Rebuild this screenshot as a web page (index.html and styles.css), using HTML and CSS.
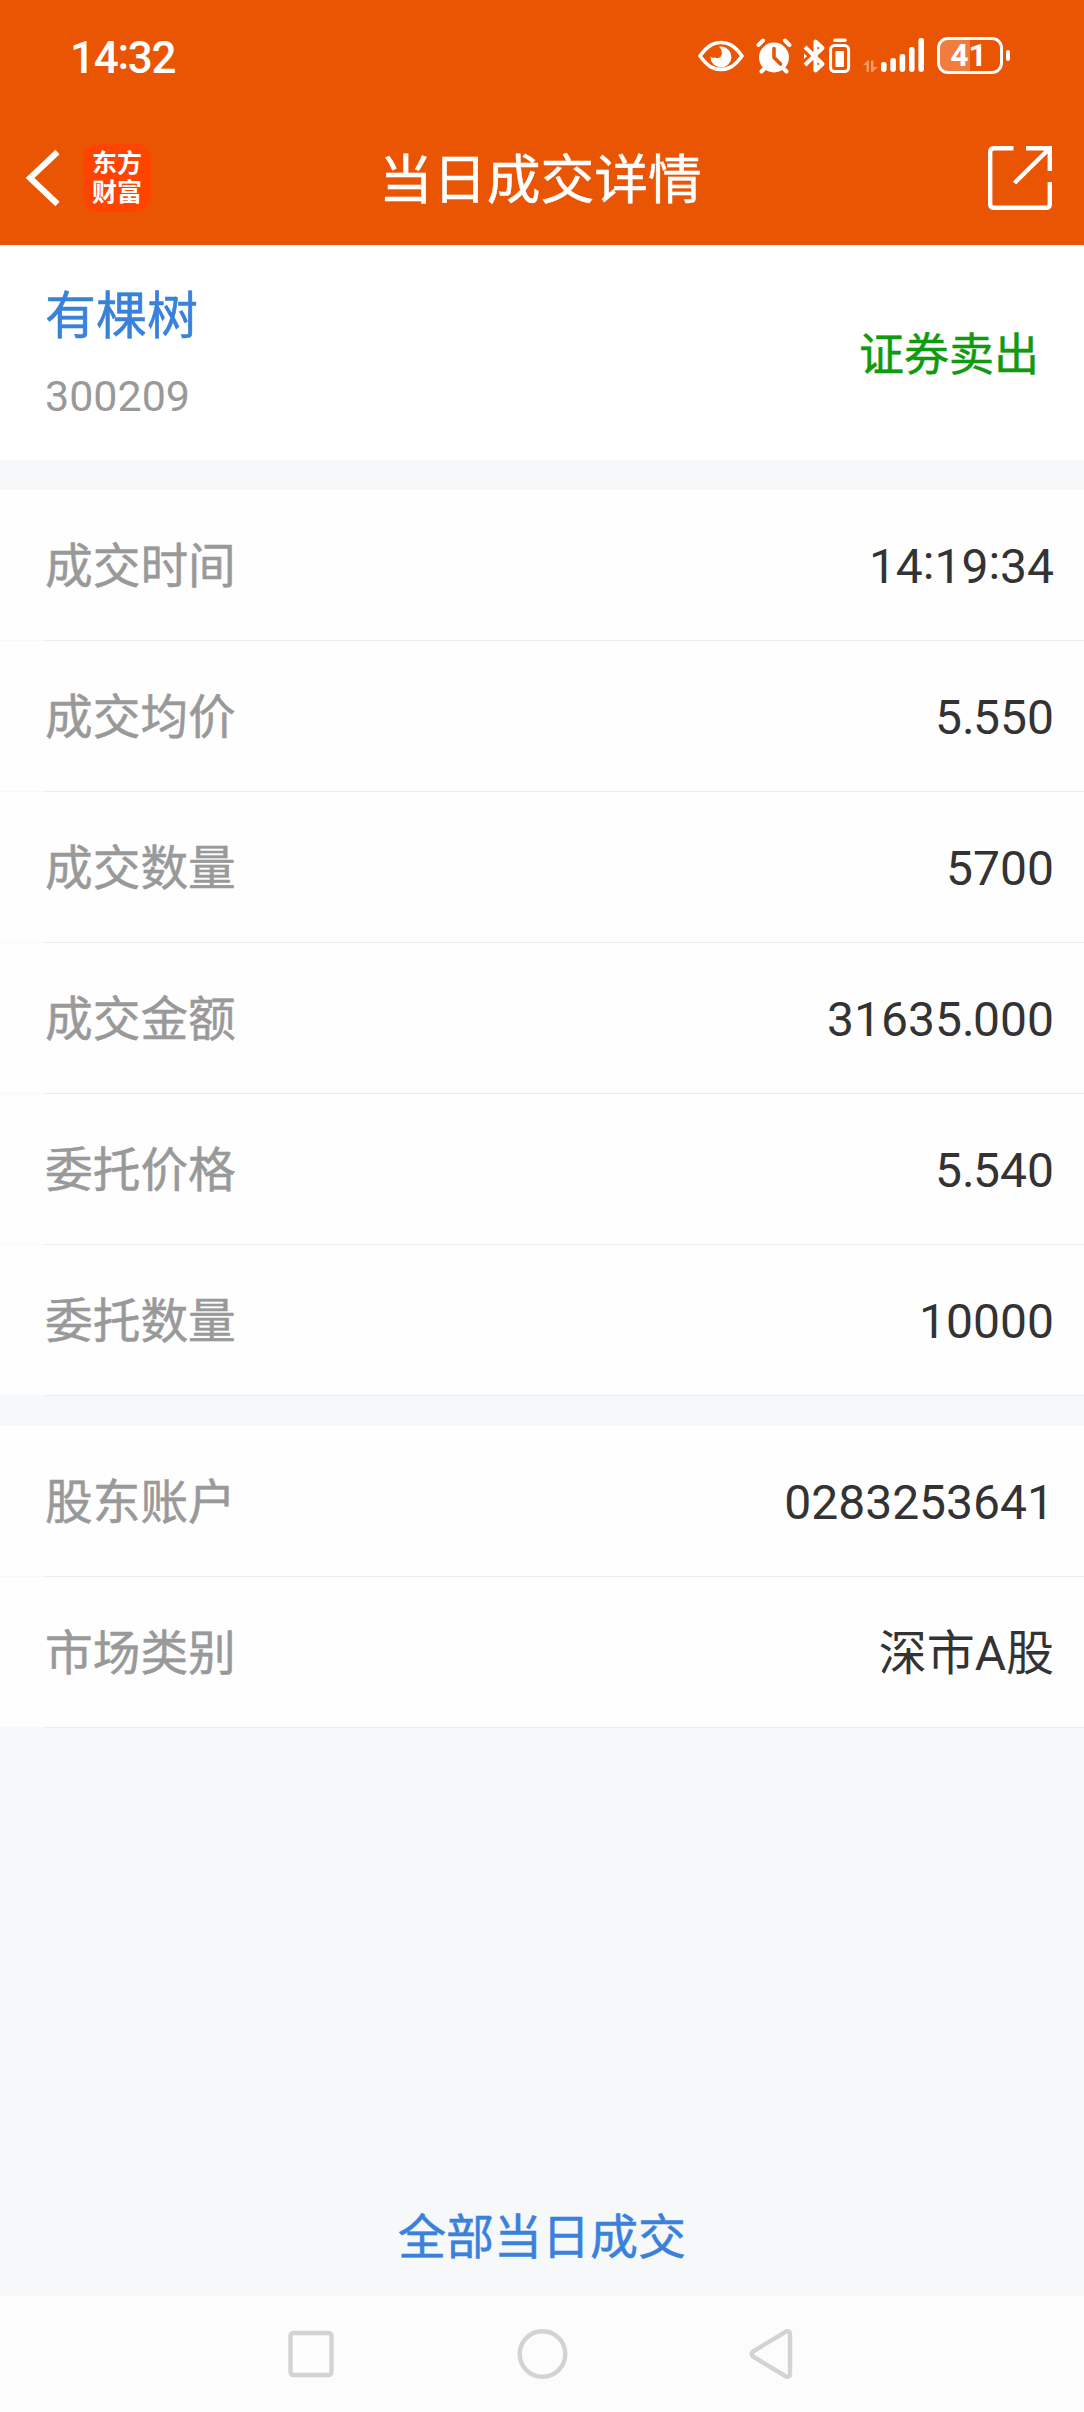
FILE: index.html
```html
<!DOCTYPE html>
<html lang="zh-CN">
<head>
<meta charset="utf-8">
<title>当日成交详情</title>
<link rel="stylesheet" href="styles.css">
</head>
<body>
<div class="screen">
  <header class="header">
    <div class="status">
      <time class="clock">14<span class="colon">:</span>32</time>
      <div class="status-icons">
        <svg class="eye" width="46" height="36" viewBox="0 0 46 36" fill="none" stroke="currentColor">
          <path d="M2 18C10 7 16 4.500 23 4.500S36 7 44 18C36 29 30 31.500 23 31.500S10 29 2 18Z" stroke-width="3.600" stroke-linejoin="round"/>
          <path d="M23.500 8.500A10.500 10.500 0 1 1 12.500 18.500Q14.500 20.500 17 19.500Q20 21.500 23 18.500Q25.500 13 21 8.800Z" fill="currentColor" stroke="none"/>
        </svg>
        <svg class="alarm" width="36" height="36" viewBox="0 0 36 36" fill="none" stroke="currentColor" stroke-linecap="round">
          <circle cx="18" cy="19.500" r="15" fill="currentColor" stroke="none"/>
          <path d="M2.500 7 7 2.500M29 2.500 33.500 7M8 31 5.500 33.500M28 31 30.500 33.500" stroke-width="4"/>
          <path class="alarm-hands" d="M18 10.500V19.500L24.500 26" stroke-width="3.600"/>
        </svg>
        <svg class="bluetooth" width="48" height="36" viewBox="0 0 48 36" fill="none" stroke="currentColor">
          <path d="M2 9 19.500 26 12.500 32.500V3.500L19.500 10 2 27" stroke-width="4" stroke-linejoin="round"/>
          <path d="M1 15.500V21L4 18.200Z" fill="currentColor" stroke="none"/>
          <rect x="27.600" y="7.600" width="18" height="26" rx="4" stroke-width="3"/>
          <path d="M32 2.300H42" stroke-width="3.400" stroke-linecap="round"/>
          <rect x="32.500" y="13" width="8.500" height="16" rx="1" fill="currentColor" stroke="none"/>
        </svg>
        <svg class="signal" width="62" height="36" viewBox="0 0 62 36" fill="currentColor">
          <path opacity=".4" d="M0 27 4.500 22.500H6V34H3.500V27ZM8 22.500H10.500V29H15L9.500 34H8Z"/>
          <rect x="18" y="24" width="5.600" height="10" rx="2.400"/>
          <rect x="27.300" y="20" width="5.600" height="14" rx="2.400"/>
          <rect x="36.600" y="16" width="5.600" height="18" rx="2.400"/>
          <rect x="46" y="9" width="5.600" height="25" rx="2.400"/>
          <rect x="55.400" y="0" width="5.600" height="34" rx="2.400"/>
        </svg>
        <div class="battery"><span class="battery-level">41</span></div>
        <div class="battery-tip"></div>
      </div>
    </div>
    <div class="titlebar">
      <div class="nav-left">
        <svg width="36" height="58" viewBox="0 0 36 58" fill="none" stroke="currentColor" stroke-width="6"><path d="M32.500 3 5 29 32.500 55"/></svg>
        <div class="logo"><span>东方</span><span>财富</span></div>
      </div>
      <h1 class="title">当日成交详情</h1>
      <svg class="share" width="64" height="64" viewBox="0 0 64 64" fill="none" stroke="currentColor" stroke-width="4.400">
        <path d="M25.500 2.200H6Q2.200 2.200 2.200 6V58Q2.200 61.800 6 61.800H58Q61.800 61.800 61.800 58V36"/>
        <path d="M38 2.200H61.800V25M61 3 26.500 37"/>
      </svg>
    </div>
  </header>

  <section class="summary">
    <div>
      <div class="stock-name">有棵树</div>
      <div class="stock-code">300209</div>
    </div>
    <div class="side">证券卖出</div>
  </section>

  <dl class="group">
    <div class="row"><dt>成交时间</dt><dd>14<span class="colon">:</span>19<span class="colon">:</span>34</dd></div>
    <div class="row"><dt>成交均价</dt><dd>5<span class="dot">.</span>550</dd></div>
    <div class="row"><dt>成交数量</dt><dd>5700</dd></div>
    <div class="row"><dt>成交金额</dt><dd>31635<span class="dot">.</span>000</dd></div>
    <div class="row"><dt>委托价格</dt><dd>5<span class="dot">.</span>540</dd></div>
    <div class="row"><dt>委托数量</dt><dd>10000</dd></div>
  </dl>
  <dl class="group">
    <div class="row"><dt>股东账户</dt><dd>0283253641</dd></div>
    <div class="row"><dt>市场类别</dt><dd>深市A股</dd></div>
  </dl>

  <div class="all-trades">全部当日成交</div>

  <nav class="system-nav">
    <svg width="50" height="52" viewBox="0 0 50 52"><rect x="4.500" y="5" width="41" height="42" rx="3"/></svg>
    <svg width="52" height="52" viewBox="0 0 52 52"><circle cx="25.500" cy="26" r="22.800"/></svg>
    <svg width="46" height="52" viewBox="0 0 46 52"><path d="M4 23.500Q1.500 26 4 28.500L37 48.500Q41 49.500 41 46V6Q41 2.500 37 3.500Z"/></svg>
  </nav>
</div>
</body>
</html>
```
FILE: styles.css
```css
* { box-sizing: border-box; }

body {
  margin: 0;
  background: #f6f8fa;
  font-family: Roboto, "Noto Sans CJK SC", sans-serif;
}

svg { display: block; flex: none; }

.screen {
  width: 1084px;
  height: 2412px;
  display: flex;
  flex-direction: column;
}

.header {
  height: 245px;
  flex: none;
  background: #e95502;
  color: #fff;
}

.status {
  height: 111px;
  padding: 0 74px 0 70px;
  display: flex;
  align-items: center;
  justify-content: space-between;
}

.clock {
  font-size: 44px;
  line-height: 52px;
  font-weight: 500;
  letter-spacing: -1.300px;
  padding-top: 4px;
}

.colon { vertical-align: .09em; line-height: 1; }

.status-icons { display: flex; align-items: center; }
.alarm { margin-left: 12px; }
.alarm-hands { stroke: #e95502; }
.bluetooth { margin-left: 11px; }
.signal { margin-left: 12px; }

.battery {
  width: 66px;
  height: 37px;
  margin-left: 12px;
  padding-right: 3px;
  border: 3px solid #fff;
  border-radius: 11px;
  background: linear-gradient(90deg, #f07c3e 50%, transparent 50%);
  display: flex;
  align-items: center;
  justify-content: center;
}

.battery-level {
  font-size: 32px;
  line-height: 31px;
  font-weight: 700;
}

.battery-tip {
  width: 4px;
  height: 11px;
  margin-left: 3px;
  border-radius: 2px;
  background: #fff;
}

.titlebar {
  height: 134px;
  padding: 0 32px 0 25px;
  display: grid;
  grid-template-columns: 1fr auto 1fr;
  align-items: start;
}

.nav-left { display: flex; align-items: center; gap: 22px; padding-top: 33px; }

.logo {
  width: 68px;
  height: 68px;
  border-radius: 15px;
  background: #ff4400;
  display: flex;
  flex-direction: column;
  align-items: center;
  justify-content: center;
  font-size: 25px;
  line-height: 29px;
  font-weight: 700;
}

.title {
  margin: 32px 0 0 4px;
  font-size: 53.800px;
  line-height: 76px;
  font-weight: 400;
  -webkit-text-stroke: .5px currentColor;
}

.share { justify-self: end; margin-top: 35px; }

.summary {
  height: 215px;
  flex: none;
  padding: 7px 45px 0;
  background: #fff;
  display: flex;
  align-items: center;
  justify-content: space-between;
}

.stock-name { color: #3981db; font-size: 51px; line-height: 81px; -webkit-text-stroke: .5px currentColor; }
.stock-code { color: #999; font-size: 43px; line-height: 79px; }
.side { color: #109a0e; font-size: 45px; line-height: 60px; -webkit-text-stroke: .5px currentColor; }

.group { margin: 30px 0 0; background: #fefefe; flex: none; }

.row {
  height: 151px;
  padding: 3px 30px 1px 45px;
  display: flex;
  align-items: center;
  justify-content: space-between;
  background: linear-gradient(90deg, #f7f8f9 45px, #ebecee 45px) bottom / 100% 1px no-repeat;
  font-size: 47.700px;
  line-height: 70px;
}

dt { color: #999; -webkit-text-stroke: .5px currentColor; }
dd { margin: 0; color: #333; font-size: 48px; }
.dot { letter-spacing: -1.500px; }

.all-trades {
  margin-top: auto;
  padding-bottom: 23px;
  color: #3981db;
  font-size: 48px;
  line-height: 70px;
  text-align: center;
  -webkit-text-stroke: .5px currentColor;
}

.system-nav {
  height: 116px;
  flex: none;
  padding: 0 289px 0 286px;
  background: #fcfcfc;
  display: flex;
  align-items: center;
  justify-content: space-between;
  fill: none;
  stroke: #d3d3d3;
  stroke-width: 4.400px;
}
```
